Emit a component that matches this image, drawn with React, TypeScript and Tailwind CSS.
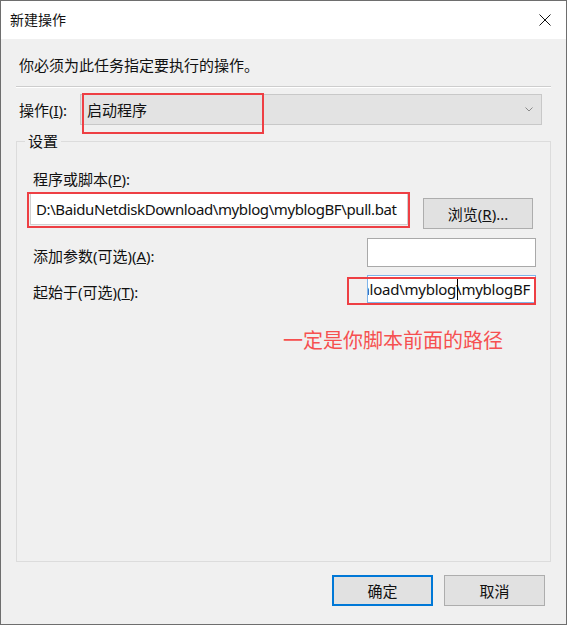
import React from "react";

const font = { fontFamily: '"Noto Sans", "Noto Sans CJK SC", sans-serif' };

const CloseIcon = () => (
  <svg width="12" height="12" viewBox="0 0 12 12" className="block">
    <path d="M0.5 0.5 L11.5 11.5 M11.5 0.5 L0.5 11.5" stroke="#111" strokeWidth="1" />
  </svg>
);

const Chevron = () => (
  <svg width="8" height="5" viewBox="0 0 8 5" className="block">
    <path d="M0.5 0.5 L4 4 L7.5 0.5" stroke="#8a8a8a" strokeWidth="1" fill="none" />
  </svg>
);

const App = () => {
  return (
    <div
      className="relative w-[567px] h-[625px] border border-[#6e6e6e] bg-[#f0f0f0] text-[15px] leading-5 text-[#111] overflow-hidden"
      style={font}
    >
      {/* 标题栏 */}
      <div className="h-[38px] bg-white flex items-center pl-[9px] pr-[15px]">
        <span className="text-[14px]">新建操作</span>
        <div className="ml-auto">
          <CloseIcon />
        </div>
      </div>

      {/* 说明 */}
      <p className="mt-[16px] pl-[18px]">你必须为此任务指定要执行的操作。</p>
      <div className="mt-[11px] mx-[15px] h-[2px] bg-[#cdcdcd] border-b border-white" />

      {/* 操作 */}
      <div className="mt-[6px] pl-[18px] flex items-center">
        <span className="w-[61px]">
          操作(<span className="underline">I</span>):
        </span>
        <div className="w-[462px] h-[31px] bg-[#e3e3e3] border border-[#c8c8c8] flex items-center pl-[6px] pr-[8px]">
          <span>启动程序</span>
          <div className="ml-auto">
            <Chevron />
          </div>
        </div>
      </div>

      {/* 设置 */}
      <div className="relative mt-[16px] ml-[15px] w-[535px] h-[421px] border border-[#dcdcdc] pl-[13px] pr-[14px] pt-[27px]">
        <span className="absolute -top-[11px] left-[8px] px-[3px] bg-[#f0f0f0]">设置</span>

        <p className="ml-[3px]">
          程序或脚本(<span className="underline">P</span>):
        </p>
        <div className="mt-[3px] flex items-start gap-[15px]">
          <div className="w-[378px] h-[33px] bg-white border border-[#d0d0d0] flex items-center pl-[5px] whitespace-nowrap overflow-hidden tracking-[-0.4px]">
            D:\BaiduNetdiskDownload\myblog\myblogBF\pull.bat
          </div>
          <button className="mt-[6px] w-[110px] h-[31px] bg-[#e1e1e1] border border-[#adadad] flex items-center justify-center">
            浏览(<span className="underline">R</span>)...
          </button>
        </div>

        <div className="mt-[9px] flex items-start">
          <span className="ml-[3px] mt-[8px]">
            添加参数(可选)(<span className="underline">A</span>):
          </span>
          <div className="ml-auto w-[169px] h-[29px] bg-white border border-[#a9a9a9]" />
        </div>

        <div className="mt-[8px] flex items-start">
          <span className="ml-[3px] mt-[7px]">
            起始于(可选)(<span className="underline">T</span>):
          </span>
          <div className="ml-auto w-[169px] h-[28px] bg-white border border-[#7eb4ea] flex items-center justify-end pr-[5px] whitespace-nowrap overflow-hidden tracking-[-0.25px]">
            <span className="shrink-0">Download\myblog\</span>
            <span className="shrink-0 w-[1px] h-[22px] bg-black -ml-[4px] mr-[3px]" />
            <span className="shrink-0">myblogBF</span>
          </div>
        </div>

        <p className="mt-[26px] ml-[253px] text-[20px] leading-6 text-[#f65050]">一定是你脚本前面的路径</p>
      </div>

      {/* 按钮 */}
      <div className="mt-[13px] pr-[21px] flex justify-end gap-[11px]">
        <button className="w-[101px] h-[31px] bg-[#e1e1e1] border-2 border-[#0078d7]">确定</button>
        <button className="w-[101px] h-[31px] bg-[#e1e1e1] border border-[#adadad]">取消</button>
      </div>

      {/* 红色标注框 */}
      <div className="absolute left-[81px] top-[92px] w-[182px] h-[41px] border-2 border-[#ee3f44]" />
      <div className="absolute left-[26px] top-[191px] w-[383px] h-[36px] border-2 border-[#ee3f44]" />
      <div className="absolute left-[346px] top-[276px] w-[189px] h-[28px] border-2 border-[#ee3f44]" />
    </div>
  );
};

export default App;
